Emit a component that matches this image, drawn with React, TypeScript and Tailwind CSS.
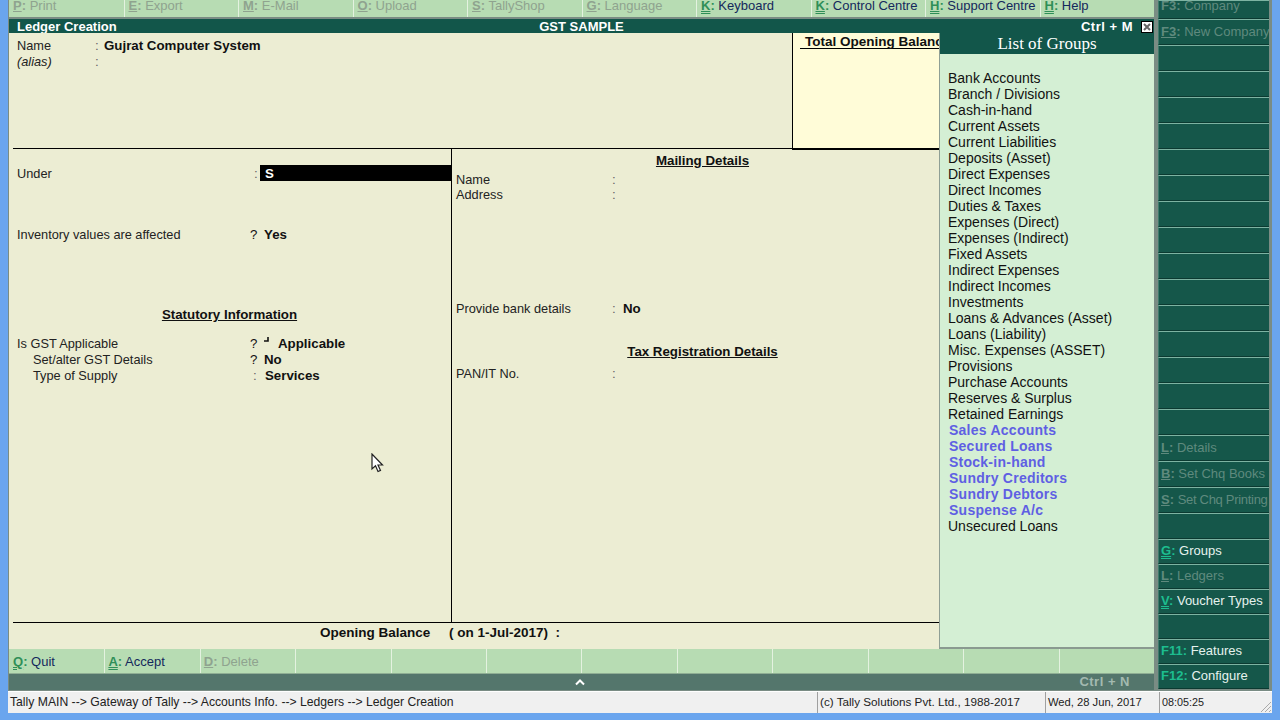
import React from 'react'

const topButtons = [
  { k: 'P', label: 'Print' },
  { k: 'E', label: 'Export' },
  { k: 'M', label: 'E-Mail' },
  { k: 'O', label: 'Upload' },
  { k: 'S', label: 'TallyShop' },
  { k: 'G', label: 'Language' },
  { k: 'K', label: 'Keyboard', on: true },
  { k: 'K', label: 'Control Centre', on: true },
  { k: 'H', label: 'Support Centre', on: true },
  { k: 'H', label: 'Help', on: true },
]

const bottomButtons = [
  { k: 'Q', label: 'Quit', on: true },
  { k: 'A', label: 'Accept', on: true },
  { k: 'D', label: 'Delete' },
  {}, {}, {}, {}, {}, {}, {}, {}, {},
]

const sideTop = [
  { k: 'F3', label: 'New Company' },
  {}, {}, {}, {}, {}, {}, {}, {}, {}, {}, {}, {}, {}, {}, {},
  { k: 'L', label: 'Details' },
  { k: 'B', label: 'Set Chq Books' },
  { k: 'S', label: 'Set Chq Printing', tight: true },
  {},
]

const sideBottom = [
  { k: 'G', label: 'Groups', on: true },
  { k: 'L', label: 'Ledgers' },
  { k: 'V', label: 'Voucher Types', on: true },
  {},
  { k: 'F11', label: 'Features', on: true, plain: true },
  { k: 'F12', label: 'Configure', on: true, plain: true },
]

const groups: [string, boolean?][] = [
  ['Bank Accounts'], ['Branch / Divisions'], ['Cash-in-hand'], ['Current Assets'],
  ['Current Liabilities'], ['Deposits (Asset)'], ['Direct Expenses'], ['Direct Incomes'],
  ['Duties & Taxes'], ['Expenses (Direct)'], ['Expenses (Indirect)'], ['Fixed Assets'],
  ['Indirect Expenses'], ['Indirect Incomes'], ['Investments'], ['Loans & Advances (Asset)'],
  ['Loans (Liability)'], ['Misc. Expenses (ASSET)'], ['Provisions'], ['Purchase Accounts'],
  ['Reserves & Surplus'], ['Retained Earnings'], ['Sales Accounts', true], ['Secured Loans', true],
  ['Stock-in-hand', true], ['Sundry Creditors', true], ['Sundry Debtors', true], ['Suspense A/c', true],
  ['Unsecured Loans'],
]

function GreenKey({ k, label, on }: { k?: string; label?: string; on?: boolean }) {
  if (!k) return null
  return (
    <span className={on ? 'text-[#14285c]' : 'text-[#8fa38f]'}>
      <span className={on ? 'text-[#2f8f58] font-bold' : 'font-bold'}>
        <span className={on ? 'underline decoration-double' : 'underline'}>{k}</span>:
      </span>{' '}
      {label}
    </span>
  )
}

function SideButton({ k, label, on, plain, tight, h }: { k?: string; label?: string; on?: boolean; plain?: boolean; tight?: boolean; h: string }) {
  return (
    <div className={`${h} flex items-center pl-[2px] border-t border-[#7db3a2] border-b border-b-[#0b3a31] border-l border-l-[#3f7a6b] bg-[#15574a] text-[13px] whitespace-nowrap overflow-hidden`}>
      {k && (
        <span className={on ? 'text-[#e6f2ee]' : 'text-[#5f8a7e]'}>
          <span className={on ? 'text-[#1dbd8f] font-bold' : 'font-bold'}>
            <span className={plain ? '' : on ? 'underline decoration-double' : 'underline'}>{k}</span>:
          </span>{' '}
          <span className={tight ? 'tracking-[-0.3px]' : ''}>{label}</span>
        </span>
      )}
    </div>
  )
}

function Label({ children, className = '' }: { children: React.ReactNode; className?: string }) {
  return <span className={`text-[12.75px] text-[#222] ${className}`}>{children}</span>
}

export default function App() {
  return (
    <div className="w-[1280px] h-[720px] overflow-hidden bg-[#6aa5ee] pl-2 pr-2 pb-[7px] flex flex-col text-[13.3px] leading-4 text-[#111] font-['Liberation_Sans',Arial,sans-serif]">
      <div className="h-[691px] flex bg-[#7a8c84]">
        {/* main window */}
        <div className="w-[1146px] flex flex-col">
          <div className="h-[17px] ml-px grid grid-cols-10 bg-[#b7dcb3] overflow-hidden text-[13px]">
            {topButtons.map((b, i) => (
              <div key={i} className={`${i ? 'border-l' : ''} border-[#e4f2e0] pl-1 -mt-[2px] whitespace-nowrap`}>
                <GreenKey {...b} />
              </div>
            ))}
          </div>
          <div className="mt-[2px] h-[14px] ml-px grid grid-cols-3 items-center bg-[#12564a] text-white font-bold text-[13px]">
            <span className="pl-2">Ledger Creation</span>
            <span className="text-center">GST SAMPLE</span>
            <div className="flex justify-end items-center gap-2">
              <span className="tracking-[0.5px]">Ctrl + M</span>
              <span className="w-3 h-3 bg-white border border-black flex items-center justify-center mr-px">
                <svg width="8" height="8" viewBox="0 0 8 8">
                  <path d="M1 1 L7 7 M7 1 L1 7" stroke="#666" strokeWidth="2" />
                </svg>
              </span>
            </div>
          </div>

          <div className="h-[616px] ml-px flex">
            {/* form */}
            <div className="relative w-[930px] flex flex-col bg-[#ecedd3] overflow-hidden leading-[18px]">
              <div className="h-[116px] flex">
                <div className="flex-1 pt-1 pl-1 border-b border-black ml-1">
                  <div className="flex h-4">
                    <Label className="w-[78px]">Name</Label>
                    <span className="w-[9px] text-[#666]">:</span>
                    <b>Gujrat Computer System</b>
                  </div>
                  <div className="flex h-4">
                    <Label className="w-[78px] italic">(alias)</Label>
                    <span className="text-[#666]">:</span>
                  </div>
                </div>
                <div className="w-[147px] bg-[#fffcd8] border-l border-black border-b-2 border-b-black pl-[7px] -mb-px">
                  <div className="pl-[5px] -mr-4 h-[16px] border-b border-black font-bold text-[13.5px] whitespace-nowrap">Total Opening Balance</div>
                </div>
              </div>

              <div className="flex-1 flex ml-1 border-b border-black">
                <div className="w-[439px] border-r border-black">
                  <div className="mt-4 flex h-4 pl-1">
                    <Label className="w-[237px]">Under</Label>
                    <span className="w-[6px] text-[#666]">:</span>
                    <div className="flex-1 bg-black text-white font-bold pl-[5px]">S</div>
                  </div>
                  <div className="mt-[45px] flex h-4 pl-1">
                    <Label className="w-[233px]">Inventory values are affected</Label>
                    <span className="w-[14px]">?</span>
                    <b>Yes</b>
                  </div>
                  <div className="mt-[64px] h-4 text-center pr-[5px]">
                    <b className="underline">Statutory Information</b>
                  </div>
                  <div className="mt-[13px] flex h-4 pl-1">
                    <Label className="w-[233px]">Is GST Applicable</Label>
                    <span className="w-[13px]">?</span>
                    <svg width="7" height="8" viewBox="0 0 7 8" className="mt-px mr-2">
                      <path d="M5 1 V5 H1" fill="none" stroke="#111" strokeWidth="1.6" />
                    </svg>
                    <b>Applicable</b>
                  </div>
                  <div className="flex h-4 pl-5">
                    <Label className="w-[217px]">Set/alter GST Details</Label>
                    <span className="w-[14px]">?</span>
                    <b>No</b>
                  </div>
                  <div className="flex h-4 pl-5">
                    <Label className="w-[220px]">Type of Supply</Label>
                    <span className="w-[12px] text-[#666]">:</span>
                    <b>Services</b>
                  </div>
                </div>
                <div className="flex-1">
                  <div className="mt-[3px] h-4 text-center pl-[14px]">
                    <b className="underline">Mailing Details</b>
                  </div>
                  <div className="mt-1 flex h-[15px] pl-1 leading-4">
                    <Label className="w-[156px]">Name</Label>
                    <span className="text-[#666]">:</span>
                  </div>
                  <div className="flex h-[15px] pl-1 leading-4">
                    <Label className="w-[156px]">Address</Label>
                    <span className="text-[#666]">:</span>
                  </div>
                  <div className="mt-[98px] flex h-4 pl-1">
                    <Label className="w-[156px]">Provide bank details</Label>
                    <span className="w-[11px] text-[#666]">:</span>
                    <b>No</b>
                  </div>
                  <div className="mt-[27px] h-4 text-center pl-[14px]">
                    <b className="underline">Tax Registration Details</b>
                  </div>
                  <div className="mt-[6px] flex h-4 pl-1">
                    <Label className="w-[156px]">PAN/IT No.</Label>
                    <span className="text-[#666]">:</span>
                  </div>
                </div>
              </div>

              <div className="h-[26px] pl-[311px] pt-[1px] flex font-bold whitespace-pre text-[13.5px]">
                <span className="w-[129px]">Opening Balance</span>
                <span>( on 1-Jul-2017)  :</span>
              </div>

              {/* mouse pointer */}
              <svg width="13" height="20" viewBox="0 0 13 20" className="absolute left-[362px] top-[420px]">
                <path d="M1 1 V16 L4.5 12.8 L7 18.5 L9.5 17.4 L7 12 H11.5 Z" fill="#fff" stroke="#222" strokeWidth="1.2" />
              </svg>
            </div>

            {/* list of groups */}
            <div className="w-[215px] flex flex-col bg-[#d4efd4] border-l border-[#8f9f95] border-b-2 border-b-[#8a9a90] text-[14px]">
              <div className="h-[21px] pt-px bg-[#12564a] text-white text-center text-[17px] leading-5 font-['Liberation_Serif',serif]">List of Groups</div>
              <div className="pt-4 pl-2">
                {groups.map(([name, hit]) => (
                  <div key={name} className={`h-4 whitespace-nowrap ${hit ? 'pl-px font-bold tracking-[0.25px] text-[#5f5fe3]' : 'text-[#111]'}`}>
                    {name}
                  </div>
                ))}
              </div>
            </div>
          </div>

          <div className="h-[25px] ml-px grid grid-cols-12 bg-[#b7dcb3] border-b border-[#8fae94] text-[13px]">
            {bottomButtons.map((b, i) => (
              <div key={i} className={`${i ? 'border-l pl-[3px]' : 'pl-1'} border-[#e4f2e0] pt-[5px] whitespace-nowrap`}>
                <GreenKey {...b} />
              </div>
            ))}
          </div>
          <div className="h-[16px] ml-px grid grid-cols-3 items-center bg-[#54766c]">
            <span />
            <div className="flex justify-center pr-[2px]">
              <svg width="10" height="7" viewBox="0 0 10 7">
                <path d="M1 5.5 L5 1.5 L9 5.5" fill="none" stroke="#fff" strokeWidth="2" />
              </svg>
            </div>
            <span className="text-right pr-6 text-[13px] font-bold tracking-[0.5px] text-[#a3bab0]">Ctrl + N</span>
          </div>
        </div>

        {/* right button column */}
        <div className="ml-1 w-[111px] flex flex-col">
          <SideButton h="h-[19px] pb-[8px]" k="F3" label="Company" plain />
          {sideTop.map((b, i) => (
            <SideButton key={i} h="h-[26px]" {...b} />
          ))}
          {sideBottom.map((b, i) => (
            <SideButton key={i} h="h-[25px] pb-[2px]" {...b} />
          ))}
        </div>
      </div>

      {/* status bar */}
      <div className="h-[22px] flex bg-[#f0f0f0] border-t border-[#ffffff] text-[#222] whitespace-nowrap leading-[20px]">
        <div className="w-[809px] pl-[2px] text-[12.2px]">Tally MAIN --&gt; Gateway of Tally --&gt; Accounts Info. --&gt; Ledgers --&gt; Ledger Creation</div>
        <div className="w-[228px] border-l border-[#a0a0a0] pl-[2px] text-[11.7px]">(c) Tally Solutions Pvt. Ltd., 1988-2017</div>
        <div className="w-[114px] border-l border-[#a0a0a0] pl-[2px] text-[11.2px]">Wed, 28 Jun, 2017</div>
        <div className="flex-1 border-l border-[#a0a0a0] pl-[2px] flex justify-between text-[10.8px]">
          <span>08:05:25</span>
          <svg width="14" height="14" viewBox="0 0 14 14" className="self-end">
            <path d="M13 3 L3 13 M13 7 L7 13 M13 11 L11 13" stroke="#aaa" strokeWidth="1" />
          </svg>
        </div>
      </div>
    </div>
  )
}
